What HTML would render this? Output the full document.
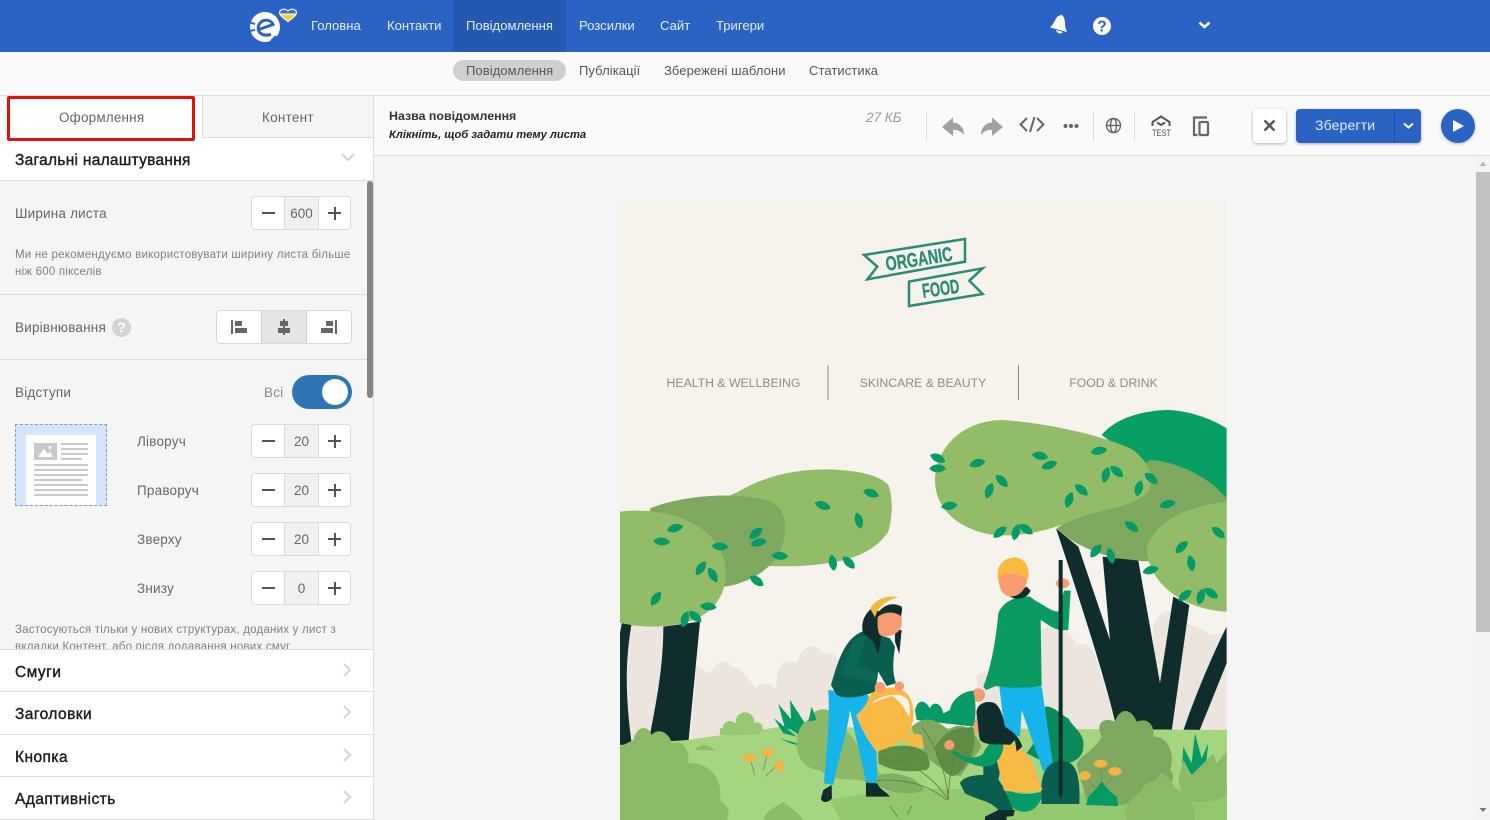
<!DOCTYPE html>
<html lang="uk"><head><meta charset="utf-8"><title>Редактор</title>
<style>
*{box-sizing:border-box}
html,body{margin:0;padding:0;width:1490px;height:820px;overflow:hidden;background:#f5f5f5;font-family:"Liberation Sans",sans-serif}
.a{position:absolute}
.t{position:absolute;white-space:nowrap;line-height:18px}
.nav{color:#e6eefb;font-size:13.1px;top:17px}
.sub{color:#555;font-size:13px;top:62px;letter-spacing:.08px}
.lb{color:#666;font-size:13.5px;letter-spacing:.2px}
.h{color:#1c1c1c;font-size:15.5px;letter-spacing:.45px;-webkit-text-stroke:.4px #1c1c1c}
.sm{color:#808080;font-size:11.5px;letter-spacing:.22px}
.st{position:absolute;left:251px;width:100px;height:34px;background:#fff;border:1px solid #d9d9d9;border-radius:4px}
.st i{position:absolute;left:32px;top:0;width:35px;height:32px;background:#f0f0f0;border-left:1px solid #d9d9d9;border-right:1px solid #d9d9d9;font:13.5px/34px "Liberation Sans",sans-serif;font-style:normal;color:#666;text-align:center}
.st b{position:absolute;background:#555}
.m{left:10px;top:15px;width:13px;height:2px}
.p1{left:76px;top:15px;width:13px;height:2px}
.p2{left:81.500px;top:9.500px;width:2px;height:13px}
.ln{position:absolute;background:#ddd;height:1px}
</style></head><body>

<!-- top bar -->
<div class="a" style="left:0;top:0;width:1490px;height:52px;background:#2b63c5"></div>
<div class="a" style="left:453px;top:0;width:113px;height:52px;background:#2558b0"></div>
<svg class="a" style="left:246px;top:5px" width="54" height="42" viewBox="246 5 54 42">
<circle cx="265" cy="27" r="15" fill="#fff"/>
<path d="M249 22 L255 24 M249 31 L255 30 M271 41 L276 36" stroke="#2b63c5" stroke-width="2"/>
<path d="M257.500 30 L273 24.500 C271 19 262.500 18.500 259 24.500 C256 31 261 37 271 34.500" fill="none" stroke="#2b63c5" stroke-width="3"/>
<path d="M288 21.500 C283 18 279.500 15.500 279.500 12.500 C279.500 9 284.500 8 288 11 C291.500 8 296.500 9 296.500 12.500 C296.500 15.500 293 18 288 21.500Z" fill="#f3d23c" stroke="#fff" stroke-width="1"/>
<path d="M279.800 14 C279 9 284.500 8 288 11 C291.500 8 297 9 296.200 14Z" fill="#3a6fc9" stroke="#fff" stroke-width="1"/>
</svg>
<span class="t nav" style="left:311px">Головна</span>
<span class="t nav" style="left:387px">Контакти</span>
<span class="t nav" style="left:466px">Повідомлення</span>
<span class="t nav" style="left:579px">Розсилки</span>
<span class="t nav" style="left:660px">Сайт</span>
<span class="t nav" style="left:716px">Тригери</span>
<svg class="a" style="left:1045px;top:10px" width="70" height="32" viewBox="1045 10 70 32">
<path d="M1050 27.500 C1053 25 1054.500 21 1056 18.500 C1057 16.500 1059 15.500 1060 15.500 L1061 14.500 L1063 16 C1064.500 18 1065 21 1065 24 C1065 27 1066 30 1067 32Z" fill="#fff"/>
<path d="M1056 30 L1063 32 C1061.500 34.500 1057 34 1056 30Z" fill="#fff"/>
<circle cx="1102" cy="26" r="9" fill="#fff"/>
<text x="1102" y="31.500" text-anchor="middle" font-family="Liberation Sans" font-weight="700" font-size="15.500" fill="#2b63c5">?</text>
</svg>
<svg class="a" style="left:1198px;top:21px" width="13" height="9" viewBox="0 0 13 9"><path d="M1.500 1.500 L6.500 6 L11.500 1.500" fill="none" stroke="#fff" stroke-width="2.600"/></svg>

<!-- sub nav -->
<div class="a" style="left:0;top:52px;width:1490px;height:44px;background:#fafafa;border-bottom:1px solid #ddd"></div>
<div class="a" style="left:453px;top:60px;width:113px;height:21px;border-radius:11px;background:#cfcfcf"></div>
<span class="t sub" style="left:466px">Повідомлення</span>
<span class="t sub" style="left:579px">Публікації</span>
<span class="t sub" style="left:664px">Збережені шаблони</span>
<span class="t sub" style="left:809px">Статистика</span>

<!-- sidebar -->
<div class="a" style="left:0;top:96px;width:374px;height:724px;background:#f5f5f5;border-right:1px solid #ddd"></div>
<div class="a" style="left:0;top:96px;width:202px;height:42px;background:#fff"></div>
<div class="a" style="left:202px;top:96px;width:171px;height:42px;background:#f5f5f5;border-left:1px solid #ddd;border-bottom:1px solid #ddd"></div>
<div class="a" style="left:0;top:138px;width:373px;height:43px;background:#fff;border-bottom:1px solid #ddd"></div>
<div class="a" style="left:7px;top:96px;width:188px;height:45px;border:3px solid #e01010;border-radius:2px"></div>
<span class="t" style="left:59px;top:109px;font-size:13.5px;color:#666;letter-spacing:.18px">Оформлення</span>
<span class="t" style="left:262px;top:109px;font-size:13.5px;color:#666;letter-spacing:.25px">Контент</span>
<span class="t h" style="left:15px;top:152px;letter-spacing:.28px">Загальні налаштування</span>
<svg class="a" style="left:341px;top:153px" width="14" height="9" viewBox="0 0 14 9"><path d="M1 1 L7 7 L13 1" fill="none" stroke="#d5d5d5" stroke-width="2"/></svg>

<span class="t lb" style="left:15px;top:205px">Ширина листа</span>
<div class="st" style="top:196px"><b class="m"></b><i>600</i><b class="p1"></b><b class="p2"></b></div>
<span class="t sm" style="left:15px;top:246px">Ми не рекомендуємо використовувати ширину листа більше</span>
<span class="t sm" style="left:15px;top:263px">ніж 600 пікселів</span>
<div class="ln" style="left:0;top:294px;width:367px"></div>

<span class="t lb" style="left:15px;top:319px">Вирівнювання</span>
<div class="a" style="left:112px;top:318px;width:19px;height:19px;border-radius:50%;background:#d4d4d4;color:#fff;font:bold 14px/19px 'Liberation Sans',sans-serif;text-align:center">?</div>
<div class="a" style="left:216px;top:310px;width:136px;height:34px;background:#fff;border:1px solid #d9d9d9;border-radius:4px"></div>
<div class="a" style="left:261px;top:311px;width:46px;height:32px;background:#e5e5e5;border-left:1px solid #d0d0d0;border-right:1px solid #d0d0d0"></div>
<svg class="a" style="left:216px;top:310px" width="136" height="34" viewBox="216 310 136 34" fill="#666">
<rect x="231" y="320" width="2" height="14"/><rect x="235" y="321" width="7" height="5"/><rect x="235" y="328" width="12" height="5"/>
<rect x="283" y="319" width="2" height="16"/><rect x="280" y="321" width="8" height="5"/><rect x="278" y="328" width="12" height="5"/>
<rect x="335" y="320" width="2" height="14"/><rect x="326" y="321" width="7" height="5"/><rect x="321" y="328" width="12" height="5"/>
</svg>
<div class="ln" style="left:0;top:359px;width:367px"></div>

<span class="t lb" style="left:15px;top:384px">Відступи</span>
<span class="t lb" style="left:264px;top:384px;color:#888">Всі</span>
<div class="a" style="left:292px;top:375px;width:60px;height:34px;border-radius:17px;background:#2f74b5"></div>
<div class="a" style="left:322px;top:379px;width:26px;height:26px;border-radius:50%;background:#fff"></div>

<div class="a" style="left:15px;top:424px;width:92px;height:82px;background:#d5e6fc;border:1px dashed #7f9fc4"></div>
<svg class="a" style="left:26px;top:435px" width="70" height="70" viewBox="26 435 70 70">
<rect x="26" y="435" width="70" height="70" fill="#fff"/>
<rect x="34" y="443" width="23" height="17" fill="#c9c9c9"/>
<path d="M38 457 L43.500 449 L48 454 L50 452 L53 457Z" fill="#fff"/><circle cx="50" cy="447.500" r="1.500" fill="#fff"/>
<g fill="#c9c9c9"><rect x="61" y="443" width="27" height="2"/><rect x="61" y="448" width="27" height="2"/><rect x="61" y="453" width="27" height="2"/><rect x="61" y="458" width="21" height="2"/>
<rect x="34" y="464" width="54" height="2"/><rect x="34" y="469" width="54" height="2"/><rect x="34" y="474" width="54" height="2"/><rect x="34" y="479" width="48" height="2"/><rect x="34" y="484" width="54" height="2"/><rect x="34" y="489" width="54" height="2"/><rect x="34" y="494" width="54" height="2"/></g>
</svg>
<span class="t lb" style="left:137px;top:433px">Ліворуч</span>
<span class="t lb" style="left:137px;top:482px">Праворуч</span>
<span class="t lb" style="left:137px;top:531px">Зверху</span>
<span class="t lb" style="left:137px;top:580px">Знизу</span>
<div class="st" style="top:424px"><b class="m"></b><i>20</i><b class="p1"></b><b class="p2"></b></div>
<div class="st" style="top:473px"><b class="m"></b><i>20</i><b class="p1"></b><b class="p2"></b></div>
<div class="st" style="top:522px"><b class="m"></b><i>20</i><b class="p1"></b><b class="p2"></b></div>
<div class="st" style="top:571px"><b class="m"></b><i>0</i><b class="p1"></b><b class="p2"></b></div>
<span class="t sm" style="left:15px;top:621px">Застосуються тільки у нових структурах, доданих у лист з</span>
<span class="t sm" style="left:15px;top:638px">вкладки Контент, або після додавання нових смуг</span>

<div class="a" style="left:0;top:649px;width:373px;height:171px;background:#fff"></div>
<div class="ln" style="left:0;top:649px;width:373px"></div>
<div class="ln" style="left:0;top:691px;width:373px"></div>
<div class="ln" style="left:0;top:734px;width:373px"></div>
<div class="ln" style="left:0;top:776px;width:373px"></div>
<div class="ln" style="left:0;top:819px;width:373px"></div>
<span class="t h" style="left:15px;top:664px">Смуги</span>
<span class="t h" style="left:15px;top:706px">Заголовки</span>
<span class="t h" style="left:15px;top:749px">Кнопка</span>
<span class="t h" style="left:15px;top:791px">Адаптивність</span>
<svg class="a" style="left:342px;top:660px" width="11" height="146" viewBox="0 0 11 146" fill="none" stroke="#d5d5d5" stroke-width="2">
<path d="M2 4 L8 10 L2 16"/><path d="M2 46 L8 52 L2 58"/><path d="M2 89 L8 95 L2 101"/><path d="M2 131 L8 137 L2 143"/></svg>
<div class="a" style="left:367px;top:181px;width:6px;height:217px;border-radius:3px;background:#858585"></div>

<!-- toolbar -->
<div class="a" style="left:374px;top:96px;width:1116px;height:60px;background:#fafafa;border-bottom:1px solid #ddd"></div>
<span class="t" style="left:389px;top:107px;font-size:12.4px;font-weight:700;color:#333">Назва повідомлення</span>
<span class="t" style="left:389px;top:126px;font-size:11.2px;font-weight:700;font-style:italic;color:#222">Клікніть, щоб задати тему листа</span>
<span class="t" style="left:866px;top:109px;font-size:13.5px;font-style:italic;color:#999">27 КБ</span>
<svg class="a" style="left:920px;top:96px" width="300" height="60" viewBox="920 96 300 60">
<g stroke="#ddd"><path d="M926.500 111 V141"/><path d="M1093.500 111 V141"/><path d="M1134.500 111 V141"/></g>
<path d="M942 127 L953 117.500 V122.500 C960 123 964 128 964 135 C961 131 957 129.500 953 130 V136Z" fill="#a0a0a0"/>
<path d="M1003 127 L992 117.500 V122.500 C985 123 981 128 981 135 C984 131 988 129.500 992 130 V136Z" fill="#a0a0a0"/>
<g fill="none" stroke="#666" stroke-width="2"><path d="M1027 118 L1020.500 124.500 L1027 131"/><path d="M1037 118 L1043.500 124.500 L1037 131"/><path d="M1034.500 117 L1030 132"/></g>
<g fill="#666"><circle cx="1065.500" cy="126" r="2"/><circle cx="1071" cy="126" r="2"/><circle cx="1076.500" cy="126" r="2"/></g>
<g fill="none" stroke="#666" stroke-width="1.400"><circle cx="1113.500" cy="125.500" r="7"/><ellipse cx="1113.500" cy="125.500" rx="3" ry="7"/><path d="M1106.500 125.500 H1120.500"/></g>
<path d="M1152.500 126 V122 L1161 116.500 L1169.500 122 V126" fill="none" stroke="#555" stroke-width="2"/>
<path d="M1157 122.500 L1161 125 L1165 122.500" fill="none" stroke="#555" stroke-width="2"/>
<text x="1161.500" y="136" text-anchor="middle" font-family="Liberation Sans" font-size="9.500" fill="#555" textLength="19" lengthAdjust="spacingAndGlyphs">TEST</text>
<g fill="none" stroke="#666" stroke-width="2.200"><path d="M1197.500 135 H1194 V117.500 H1207"/><rect x="1199.500" y="122" width="8.500" height="13" rx="1"/></g>
</svg>
<div class="a" style="left:1253px;top:109px;width:33px;height:34px;background:#fff;border-radius:4px;box-shadow:0 1px 3px rgba(0,0,0,.3)"></div>
<svg class="a" style="left:1263px;top:119px" width="13" height="13" viewBox="0 0 13 13"><path d="M1.500 1.500 L11.500 11.500 M11.500 1.500 L1.500 11.500" stroke="#555" stroke-width="2.400"/></svg>
<div class="a" style="left:1296px;top:109px;width:125px;height:34px;background:#2b63c5;border-radius:4px;box-shadow:0 1px 3px rgba(0,0,0,.3)"></div>
<div class="a" style="left:1394px;top:109px;width:1px;height:34px;background:#1f4c9c"></div>
<span class="t" style="left:1315px;top:116px;font-size:14px;color:#e6eefb;letter-spacing:.15px">Зберегти</span>
<svg class="a" style="left:1403px;top:122px" width="11" height="8" viewBox="0 0 11 8"><path d="M1 1.500 L5.500 5.500 L10 1.500" fill="none" stroke="#fff" stroke-width="2"/></svg>
<div class="a" style="left:1441px;top:109px;width:34px;height:34px;border-radius:50%;background:#2b63c5;box-shadow:0 1px 3px rgba(0,0,0,.25)"></div>
<svg class="a" style="left:1452px;top:119px" width="13" height="14" viewBox="0 0 13 14"><path d="M1 1 L12 7 L1 13Z" fill="#fff"/></svg>

<!-- main scrollbar -->
<div class="a" style="left:1476px;top:156px;width:14px;height:664px;background:#f3f3f3"></div>
<div class="a" style="left:1476px;top:172px;width:14px;height:460px;background:#c2c2c2"></div>
<svg class="a" style="left:1476px;top:160px" width="14" height="8" viewBox="0 0 14 8"><path d="M3.500 6 L7 2 L10.500 6Z" fill="#b5b5b5"/></svg>
<svg class="a" style="left:1476px;top:806px" width="14" height="8" viewBox="0 0 14 8"><path d="M3.500 2 L7 6 L10.500 2Z" fill="#777"/></svg>

<!-- email -->
<svg class="a" style="left:620px;top:200px" width="607" height="620" viewBox="620 200 607 620">
<defs>
<path id="l" d="M-25 0 C-12 -17 12 -17 25 0 C12 15 -12 15 -25 0Z" fill="#059a66"/>
</defs>
<rect x="620" y="200" width="607" height="620" fill="#f6f2ec"/>

<!-- logo -->
<g transform="translate(840 220) scale(.3333)">
<g fill="none" stroke="#2b8a78" stroke-width="7.500" stroke-linejoin="miter">
<path d="M72 105 L375 57 L375 125 L82 178 L112 140Z"/>
<path d="M207 185 L428 145 L388 182 L428 222 L207 258Z"/>
</g>
<text transform="translate(240 137) rotate(-9)" text-anchor="middle" font-family="Liberation Sans" font-weight="700" font-size="60" textLength="202" lengthAdjust="spacingAndGlyphs" fill="#2b8a78" stroke="#2b8a78" stroke-width="1">ORGANIC</text>
<text transform="translate(305 226) rotate(-8)" text-anchor="middle" font-family="Liberation Sans" font-weight="700" font-size="60" textLength="112" lengthAdjust="spacingAndGlyphs" fill="#2b8a78" stroke="#2b8a78" stroke-width="1">FOOD</text>
</g>
<g font-family="Liberation Sans" font-size="12.250" fill="#8c8c8c" text-anchor="middle">
<text x="733.500" y="387">HEALTH &amp; WELLBEING</text>
<text x="923" y="387">SKINCARE &amp; BEAUTY</text>
<text x="1113.500" y="387">FOOD &amp; DRINK</text>
</g>
<path d="M828 365 V400 M1018.500 365 V400" stroke="#8a8a8a" stroke-width="1"/>

<!-- left part : background -->
<g transform="translate(620 400) scale(.3333)">
<path d="M20 670 H130 V1030 H20Z" fill="#ebe5de"/>
<path d="M230 790 C250 810 260 825 275 815 C290 780 320 775 335 800 C360 800 380 825 405 865 C430 840 455 850 470 870 C465 790 500 770 530 790 C550 725 590 730 610 760 C640 750 660 780 670 800 L700 1030 H210Z" fill="#ebe5de"/>
<path d="M130 680 L240 665 L205 1030 L88 1015 C110 900 130 800 130 680Z" fill="#0f2d2d"/>
<path d="M5 670 L35 670 C20 760 10 860 38 1050 L0 1060 L0 700Z" fill="#0f2d2d"/>
<path d="M355 275 C440 225 530 208 620 208 C710 210 780 225 805 255 C818 290 820 340 805 395 C770 450 700 480 620 490 C540 502 460 500 400 495 L300 300Z" fill="#93bc68"/>
<path d="M90 325 C190 285 340 275 440 300 C480 315 495 340 495 380 C495 430 480 480 420 520 C390 540 350 555 315 560 L100 520Z" fill="#7ea85f"/>
<path d="M0 335 C90 325 180 340 250 390 C300 430 325 480 315 550 C305 600 270 640 220 660 C150 685 60 685 0 668Z" fill="#93bc68"/>
</g>

<!-- right part : background -->
<g transform="translate(920 400) scale(.3333)">
<path d="M360 690 C400 670 440 680 470 735 C500 720 525 750 535 800 L600 1000 H180 L170 830 C180 810 220 810 240 830Z" fill="#ebe5de"/>
<path d="M700 680 C720 620 760 620 790 670 C840 680 860 700 880 705 C900 700 915 700 920 710 V1010 H700Z" fill="#ebe5de"/>
<path d="M545 105 C590 50 680 30 750 30 C820 35 880 60 920 85 V300 L700 220Z" fill="#079f63"/>
<path d="M410 385 C480 340 620 230 690 180 C780 185 870 235 920 295 V430 L760 480 C640 495 500 470 410 385Z" fill="#7ea85f"/>
<path d="M408 385 L475 440 L570 720 L548 470 L655 482 L720 850 L760 590 L808 615 L750 1030 L590 985 C560 850 480 600 408 385Z" fill="#0f2d2d"/>
<path d="M920 680 V790 L785 1125 L758 1090 C800 950 860 800 920 680Z" fill="#0f2d2d"/>
<path d="M45 240 C50 130 140 60 250 60 C400 72 560 110 640 150 C690 190 710 240 680 280 C640 320 560 325 470 355 C400 390 300 412 220 405 C120 390 45 330 45 240Z" fill="#93bc68"/>
<path d="M680 450 C690 380 780 320 920 305 V635 C800 630 690 560 680 450Z" fill="#93bc68"/>
</g>

<!-- ground -->
<path d="M620 745 L687 740 L780 727 L1227 730 V820 H620Z" fill="#a5d67f"/>
<path d="M1010 820 L1010 800 C1080 790 1180 790 1227 785 V820Z" fill="#94c86f"/>
<path d="M830 800 C900 785 1000 785 1080 800 L1070 820 H840Z" fill="#94c86f"/>

<!-- leaves + front, left -->
<g transform="translate(620 400) scale(.3333)">
<use href="#l" transform="translate(165 385) rotate(-15)"/><use href="#l" transform="translate(125 425) rotate(5)"/><use href="#l" transform="translate(300 440) rotate(5)"/><use href="#l" transform="translate(243 505) rotate(-55)"/><use href="#l" transform="translate(278 525) rotate(60)"/><use href="#l" transform="translate(108 596) rotate(-55)"/><use href="#l" transform="translate(265 620) rotate(5)"/><use href="#l" transform="translate(195 658) rotate(-75)"/><use href="#l" transform="translate(225 650) rotate(40)"/><use href="#l" transform="translate(408 400) rotate(-40)"/><use href="#l" transform="translate(416 428) rotate(-15)"/><use href="#l" transform="translate(480 468) rotate(5)"/><use href="#l" transform="translate(410 543) rotate(35)"/><use href="#l" transform="translate(608 317) rotate(20)"/><use href="#l" transform="translate(753 280) rotate(20)"/><use href="#l" transform="translate(716 362) rotate(75)"/><use href="#l" transform="translate(638 488) rotate(80)"/><use href="#l" transform="translate(686 488) rotate(45)"/>
<!-- left bush -->
<g fill="#8dba67"><path d="M0 1040 L40 1020 C50 975 85 975 95 1005 C115 980 150 1000 155 1030 C190 1020 210 1050 205 1090 C270 1085 310 1140 300 1200 C330 1220 330 1240 320 1260 H0Z"/></g>
<g fill="#96c872"><circle cx="330" cy="985" r="22"/><circle cx="375" cy="965" r="28"/><circle cx="410" cy="985" r="18"/><rect x="300" y="985" width="110" height="20"/></g>
<path d="M225 1050 C240 1030 265 1030 285 1052Z" fill="#8dba67"/>
<path d="M430 1260 C440 1230 460 1225 490 1205 C510 1225 540 1240 550 1260Z" fill="#8dba67"/>
<!-- spiky teal -->
<path d="M545 1035 L480 1015 L510 1030 L530 1035Z M530 1010 L462 955 L490 1000Z M545 995 L475 912 L495 985Z M555 970 L510 900 L515 990 L545 1010Z" fill="#059a66"/>
<!-- mid bush -->
<path d="M530 1040 C530 990 545 970 570 955 C580 925 620 920 640 940 L780 1120 L740 1145 C680 1130 640 1150 600 1110 C570 1110 535 1090 530 1040Z" fill="#8cb968"/>
<path d="M575 920 L565 965 L590 960Z" fill="#059a66"/>
<!-- flowers -->
<g stroke="#7d8a5f" stroke-width="2.500" fill="none"><path d="M392 1080 L404 1125"/><path d="M440 1070 L430 1110"/><path d="M470 1098 L435 1130"/></g>
<g fill="#f4b343"><ellipse cx="388" cy="1073" rx="20" ry="12"/><ellipse cx="443" cy="1058" rx="20" ry="12"/><ellipse cx="478" cy="1097" rx="13" ry="18" transform="rotate(-30 478 1097)"/></g>
<!-- woman -->
<path d="M625 870 L745 885 C760 960 775 1060 770 1150 L738 1148 C725 1080 705 1000 690 930 C680 1010 650 1090 640 1155 L612 1150 C620 1050 630 960 625 870Z" fill="#15b4ea"/>
<path d="M610 1170 L635 1155 L636 1195 C625 1210 605 1210 603 1195Z M738 1148 L772 1150 C780 1170 800 1175 810 1190 H738Z" fill="#0f2d2d"/>
<path d="M633 855 C655 780 675 710 735 692 L810 715 L825 740 C820 780 815 810 828 850 L800 858 L775 815 L765 875 C730 890 680 900 650 885Z" fill="#0a5e50"/>
<path d="M665 820 L700 720 L740 705 L710 795 L770 822 L765 850Z" fill="#0c6c5a" opacity=".8"/>
<path d="M730 700 C720 670 735 640 755 625 L795 640 L775 765 L760 725Z" fill="#0f2d2d"/>
<path d="M825 690 L845 690 L838 762 L825 725Z" fill="#0f2d2d"/>
<path d="M775 640 C800 620 830 615 845 625 V675 C840 705 800 715 780 705 C770 690 772 660 775 640Z" fill="#f79b70"/>
<path d="M768 655 C775 625 810 600 845 620 C848 630 845 640 842 648 C820 632 790 635 768 655Z" fill="#0f2d2d"/>
<path d="M750 625 C770 595 805 585 835 592 C800 600 775 620 765 652Z" fill="#f4b83d"/>
</g>

<!-- leaves, right -->
<g transform="translate(920 400) scale(.3333)">
<use href="#l" transform="translate(53 175) rotate(25)"/><use href="#l" transform="translate(53 206)"/><use href="#l" transform="translate(172 190) rotate(-15)"/><use href="#l" transform="translate(88 318) rotate(-8)"/><use href="#l" transform="translate(208 272) rotate(-70)"/><use href="#l" transform="translate(245 243) rotate(45)"/><use href="#l" transform="translate(360 168) rotate(10)"/><use href="#l" transform="translate(388 196) rotate(-20)"/><use href="#l" transform="translate(537 153) rotate(-10)"/><use href="#l" transform="translate(558 225) rotate(-75)"/><use href="#l" transform="translate(590 215) rotate(40)"/><use href="#l" transform="translate(693 235) rotate(40)"/><use href="#l" transform="translate(657 265) rotate(-75)"/><use href="#l" transform="translate(448 300) rotate(-70)"/><use href="#l" transform="translate(484 270) rotate(40)"/><use href="#l" transform="translate(743 313) rotate(-15)"/><use href="#l" transform="translate(635 380) rotate(35)"/><use href="#l" transform="translate(895 398) rotate(40)"/><use href="#l" transform="translate(785 442) rotate(-45)"/><use href="#l" transform="translate(813 490) rotate(80)"/><use href="#l" transform="translate(692 511) rotate(-15)"/><use href="#l" transform="translate(240 397) rotate(-40)"/><use href="#l" transform="translate(288 397) rotate(-75)"/><use href="#l" transform="translate(318 388) rotate(35)"/><use href="#l" transform="translate(528 453) rotate(-50)"/><use href="#l" transform="translate(572 468) rotate(75)"/><use href="#l" transform="translate(795 587) rotate(-40)"/><use href="#l" transform="translate(843 590) rotate(-75)"/><use href="#l" transform="translate(873 580) rotate(35)"/>
<!-- bushes right -->
<path d="M470 1095 C480 1060 520 1060 545 1010 C525 970 550 950 585 965 C600 920 635 925 650 965 C690 950 705 985 700 1010 C750 1010 765 1070 750 1110 C775 1130 750 1180 690 1190 L610 1215 L500 1200Z" fill="#7ea85f"/>
<path d="M785 1115 L790 1040 L815 1090 L825 1000 L845 1075 L865 1030 L855 1120 L830 1130Z" fill="#059a66"/>
<path d="M775 1140 L790 1080 L815 1125 L880 1060 L890 1090 L920 1055 V1185 C880 1210 820 1215 790 1190Z" fill="#8dba67"/>
<path d="M615 1240 C620 1190 660 1190 670 1160 C690 1140 710 1150 720 1120 C745 1120 760 1160 775 1175 C810 1180 830 1230 825 1260 H620Z" fill="#8dba67"/>
<path d="M320 1060 L370 990 L375 920 C400 915 430 950 445 955 C460 985 495 1000 490 1040 C490 1070 470 1090 400 1100Z" fill="#0a8a58"/>
<path d="M498 1215 L505 1190 L525 1170 L545 1145 L570 1175 L590 1190 L595 1218Z" fill="#059a66"/>
<g stroke="#7d8a5f" stroke-width="2.500" fill="none"><path d="M545 1105 V1145"/><path d="M583 1125 L560 1155"/><path d="M500 1135 L530 1170"/></g>
<g fill="#f4b343"><ellipse cx="542" cy="1091" rx="20" ry="12"/><ellipse cx="585" cy="1114" rx="20" ry="13"/><ellipse cx="495" cy="1127" rx="17" ry="14"/></g>
<!-- man -->
<path d="M238 860 H365 L400 1100 L370 1115 L305 930 L300 1010 L255 1000Z" fill="#15b4ea"/>
<path d="M190 860 C215 800 230 700 235 640 C250 600 300 585 330 590 C370 620 390 640 415 635 L428 690 C400 690 380 670 362 660 L365 858 C320 865 270 865 228 858 L198 870Z" fill="#0a9a62"/>
<path d="M320 590 C370 610 390 635 415 635 L432 572 L452 572 L445 690 C425 695 390 680 365 660Z" fill="#0a9a62"/>
<ellipse cx="428" cy="550" rx="20" ry="15" fill="#f79b70"/>
<path d="M270 590 C285 600 320 600 332 572 L320 560 L275 585Z" fill="#0f2d2d"/>
<path d="M235 520 H322 C325 550 310 590 270 590 C240 585 235 550 235 520Z" fill="#f79b70"/>
<path d="M233 525 C230 490 260 472 285 472 C315 475 330 500 325 535 L280 520 C260 518 240 525 233 540Z" fill="#fdb93f"/>
<path d="M416 480 H428 V1180 L422 1200 L416 1180Z" fill="#0f2d2d"/>
<!-- shovel -->
<path d="M365 1212 C360 1160 365 1120 385 1098 C405 1080 440 1075 460 1098 C478 1120 480 1170 478 1212Z" fill="#0a5e50"/>
<path d="M416 1078 H428 V1180 L422 1198 L416 1180Z" fill="#0f2d2d"/>
</g>

<!-- plants + crouching woman + can -->
<g transform="translate(850 620) scale(.3333)">
<circle cx="385" cy="225" r="20" fill="#f79b70"/>
<path d="M195 270 C205 235 225 240 240 265 C250 240 275 250 280 280 L300 270 C305 240 335 215 370 212 C378 245 380 290 370 320 L200 300Z" fill="#059a66"/>
<path d="M185 320 C220 290 250 290 295 330 C320 310 360 305 395 380 L330 470 L280 450 L240 420 L190 340Z" fill="#7ea85f"/>
<path d="M255 380 C280 340 310 320 370 322 C380 380 370 420 320 465 C290 480 260 430 255 380Z" fill="#5f8d44"/>
<path d="M85 395 C130 370 200 370 230 400 C245 430 240 450 225 450 C170 460 120 450 85 430Z" fill="#5f8d44"/>
<path d="M80 465 C130 455 190 460 225 510 C190 525 110 525 80 490Z" fill="#7fb062"/>
<g fill="none" stroke="#5a7f44" stroke-width="2.500"><path d="M85 420 C170 410 250 470 295 540"/><path d="M80 482 C150 475 230 490 290 540"/><path d="M215 320 C260 380 290 460 295 540"/><path d="M365 320 C320 370 295 450 295 540"/></g>
<g stroke="#5a7f44" stroke-width="2.500"><path d="M120 558 L142 590"/><path d="M185 558 L172 584"/></g>
<path d="M470 510 C520 530 555 520 575 515 C578 540 560 570 530 575 C490 578 470 550 470 510Z" fill="#059a66"/>
<path d="M330 490 C340 465 400 460 440 470 L465 510 L490 570 C480 580 465 575 445 570 C420 540 380 540 345 520Z" fill="#0a5e50"/>
<path d="M405 590 L445 570 L495 570 L490 588 L470 590 V600 H405Z" fill="#0f2d2d"/>
<path d="M400 430 C415 420 450 415 455 430 L445 480 H400Z" fill="#0a5e50"/>
<path d="M440 420 L460 370 C490 370 520 385 545 425 L578 510 C530 520 490 515 462 512Z" fill="#f9b945"/>
<path d="M310 390 C340 415 380 420 400 400 C410 375 435 350 458 365 C465 385 455 410 435 430 C400 455 340 425 305 398Z" fill="#059a66"/>
<circle cx="298" cy="375" r="15" fill="#f79b70"/>
<path d="M372 330 C370 310 375 295 385 285 L395 340 L385 342Z" fill="#f79b70"/>
<path d="M380 285 C375 255 405 240 430 248 C450 255 460 290 465 320 C490 335 510 355 517 380 L500 395 L495 360 L480 375 C450 370 410 380 390 360 C385 340 385 310 380 285Z" fill="#0f2d2d"/>
<!-- can -->
<path d="M150 345 L190 340 L215 345 L222 385 L170 372Z" fill="#f9b945"/>
<path d="M18 285 C40 270 50 250 60 225 C90 195 150 195 175 225 C195 255 195 300 180 330 C160 370 110 385 80 395 C55 365 30 320 18 285Z" fill="#f9b945"/>
<path d="M68 248 C90 225 150 215 170 235 C182 250 180 280 178 292 C165 270 150 240 125 228 C105 236 85 240 68 250Z" fill="#f6f2ec"/>
<circle cx="90" cy="202" r="16" fill="#f79b70"/><circle cx="148" cy="198" r="14" fill="#f79b70"/>
</g>
</svg>
</body></html>
